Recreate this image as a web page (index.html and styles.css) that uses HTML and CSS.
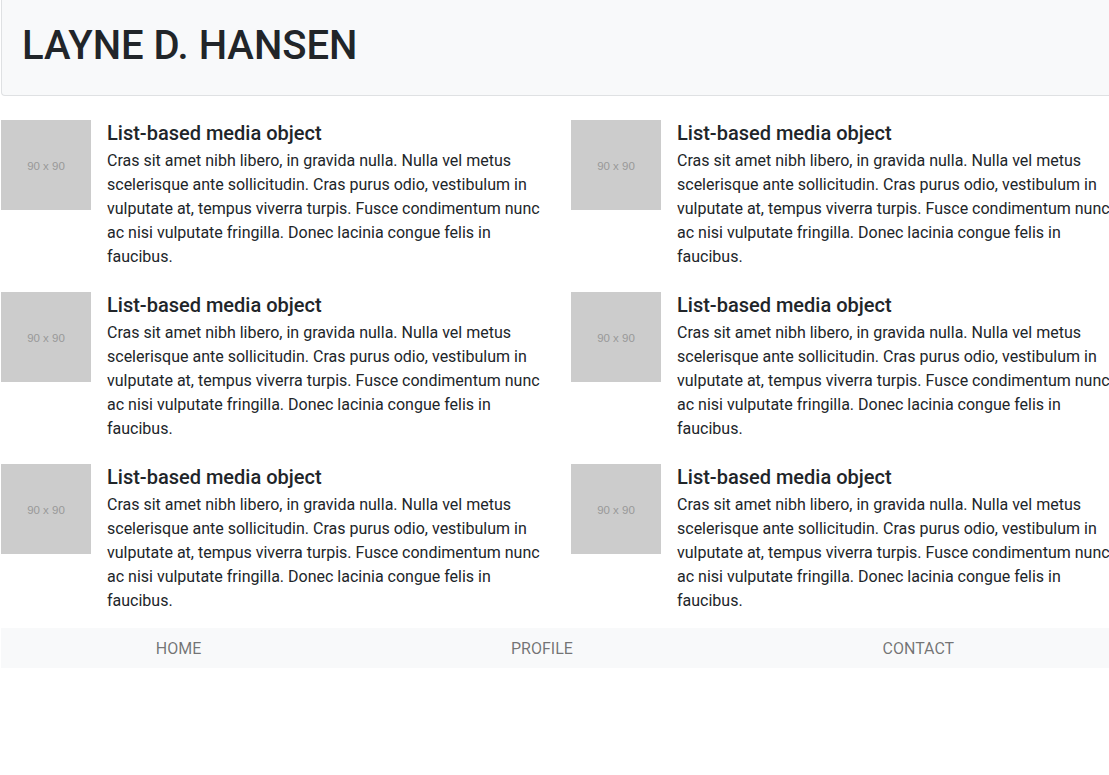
FILE: index.html
```html
<!DOCTYPE html>
<html lang="en">
<head>
<meta charset="utf-8">
<title>Layne D. Hansen</title>
<link rel="stylesheet" href="styles.css">
</head>
<body>
<div class="page">
  <header class="masthead">
    <h1 class="masthead-title">LAYNE D. HANSEN</h1>
  </header>

  <ul class="media-list">
    <li class="media">
      <div class="thumb">90 x 90</div>
      <div class="media-body">
        <h5 class="media-title">List-based media object</h5>
        <p class="media-text">Cras sit amet nibh libero, in gravida nulla. Nulla vel metus scelerisque ante sollicitudin. Cras purus odio, vestibulum in vulputate at, tempus viverra turpis. Fusce condimentum nunc ac nisi vulputate fringilla. Donec lacinia congue felis in faucibus.</p>
      </div>
    </li>
    <li class="media">
      <div class="thumb">90 x 90</div>
      <div class="media-body">
        <h5 class="media-title">List-based media object</h5>
        <p class="media-text">Cras sit amet nibh libero, in gravida nulla. Nulla vel metus scelerisque ante sollicitudin. Cras purus odio, vestibulum in vulputate at, tempus viverra turpis. Fusce condimentum nunc ac nisi vulputate fringilla. Donec lacinia congue felis in faucibus.</p>
      </div>
    </li>
    <li class="media">
      <div class="thumb">90 x 90</div>
      <div class="media-body">
        <h5 class="media-title">List-based media object</h5>
        <p class="media-text">Cras sit amet nibh libero, in gravida nulla. Nulla vel metus scelerisque ante sollicitudin. Cras purus odio, vestibulum in vulputate at, tempus viverra turpis. Fusce condimentum nunc ac nisi vulputate fringilla. Donec lacinia congue felis in faucibus.</p>
      </div>
    </li>
    <li class="media">
      <div class="thumb">90 x 90</div>
      <div class="media-body">
        <h5 class="media-title">List-based media object</h5>
        <p class="media-text">Cras sit amet nibh libero, in gravida nulla. Nulla vel metus scelerisque ante sollicitudin. Cras purus odio, vestibulum in vulputate at, tempus viverra turpis. Fusce condimentum nunc ac nisi vulputate fringilla. Donec lacinia congue felis in faucibus.</p>
      </div>
    </li>
    <li class="media">
      <div class="thumb">90 x 90</div>
      <div class="media-body">
        <h5 class="media-title">List-based media object</h5>
        <p class="media-text">Cras sit amet nibh libero, in gravida nulla. Nulla vel metus scelerisque ante sollicitudin. Cras purus odio, vestibulum in vulputate at, tempus viverra turpis. Fusce condimentum nunc ac nisi vulputate fringilla. Donec lacinia congue felis in faucibus.</p>
      </div>
    </li>
    <li class="media">
      <div class="thumb">90 x 90</div>
      <div class="media-body">
        <h5 class="media-title">List-based media object</h5>
        <p class="media-text">Cras sit amet nibh libero, in gravida nulla. Nulla vel metus scelerisque ante sollicitudin. Cras purus odio, vestibulum in vulputate at, tempus viverra turpis. Fusce condimentum nunc ac nisi vulputate fringilla. Donec lacinia congue felis in faucibus.</p>
      </div>
    </li>
  </ul>

  <nav class="footer-nav">
    <a class="nav-link" href="#">HOME</a>
    <a class="nav-link" href="#">PROFILE</a>
    <a class="nav-link" href="#">CONTACT</a>
  </nav>
</div>
</body>
</html>
```
FILE: styles.css
```css
html, body {
  margin: 0;
  padding: 0;
  overflow-x: hidden;
  background: #fff;
}

body {
  font-family: Roboto, "Liberation Sans", sans-serif;
  font-size: 16px;
  line-height: 24px;
  color: #212529;
}

.page {
  padding-left: 1px;
}

.masthead {
  width: 1140px;
  box-sizing: border-box;
  background: #f8f9fa;
  border-left: 1px solid #dfe1e3;
  border-bottom: 1px solid #dfe1e3;
  border-bottom-left-radius: 4px;
  padding: 22px 0 25px 20px;
}

.masthead-title {
  margin: 0;
  font-size: 40px;
  font-weight: 500;
  line-height: 48px;
  color: #212529;
}

.media-list {
  list-style: none;
  margin: 24px 0 0;
  padding: 0;
  display: grid;
  grid-template-columns: 540px 540px;
  column-gap: 30px;
  row-gap: 23px;
}

.media {
  display: flex;
  align-items: flex-start;
}

.thumb {
  flex: 0 0 90px;
  height: 90px;
  margin-right: 16px;
  background: #cccccc;
  color: #999999;
  font-family: "Liberation Sans", Arial, sans-serif;
  font-size: 11.5px;
  display: flex;
  align-items: center;
  justify-content: center;
  padding-top: 2px;
  box-sizing: border-box;
}

.media-body {
  flex: 1;
  min-width: 0;
  padding-top: 1px;
}

.media-title {
  margin: 0 0 4px;
  font-size: 20px;
  font-weight: 500;
  line-height: 24px;
}

.media-text {
  margin: 0;
}

.footer-nav {
  margin-top: 15px;
  background: #f8f9fa;
  display: flex;
  justify-content: space-around;
}

.nav-link {
  display: block;
  padding: 9px 16px 7px;
  color: rgba(0, 0, 0, 0.55);
  text-decoration: none;
}
```
